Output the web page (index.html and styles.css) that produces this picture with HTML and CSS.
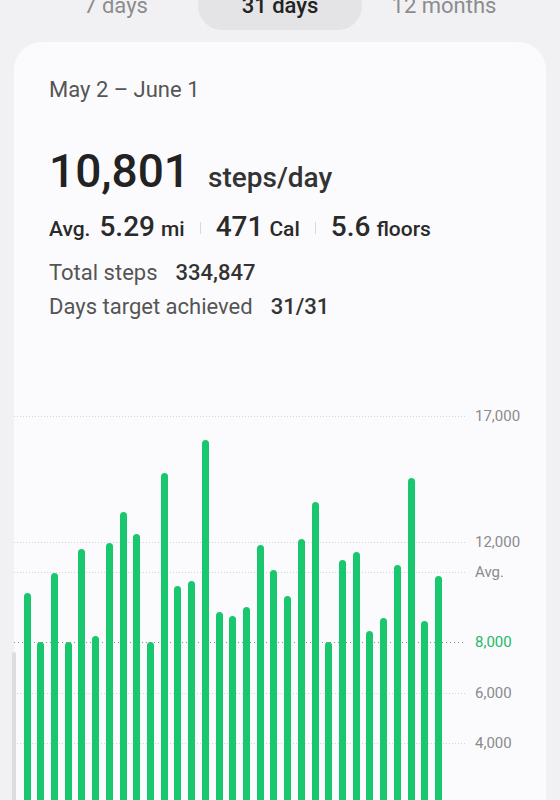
FILE: index.html
```html
<!DOCTYPE html>
<html lang="en">
<head>
    <meta charset="UTF-8">
    <meta name="viewport" content="width=device-width, initial-scale=1.0">
    <title>Steps</title>
    <link rel="stylesheet" href="styles.css">
</head>
<body>
    <div class="tabs">
        <div class="tab">7 days</div>
        <div class="tab active">31 days</div>
        <div class="tab">12 months</div>
    </div>

    <div class="card">
        <div class="range">May 2 – June 1</div>

        <div class="headline">
            <span class="big">10,801</span>
            <span class="per">steps/day</span>
        </div>

        <div class="averages">
            <span class="avg-label">Avg.</span>
            <span class="num">5.29</span>
            <span class="unit">mi</span>
            <span class="sep"></span>
            <span class="num">471</span>
            <span class="unit">Cal</span>
            <span class="sep"></span>
            <span class="num">5.6</span>
            <span class="unit">floors</span>
        </div>

        <div class="totals">
            <div class="total-row"><span>Total steps</span><span class="total-value">334,847</span></div>
            <div class="total-row"><span>Days target achieved</span><span class="total-value">31/31</span></div>
        </div>

        <div class="chart">
            <!-- grid lines, value in steps -->
            <div class="grid-line" style="--v: 17000"><span class="dots"></span><span class="axis-label">17,000</span></div>
            <div class="grid-line" style="--v: 12000"><span class="dots"></span><span class="axis-label">12,000</span></div>
            <div class="grid-line" style="--v: 10801"><span class="dots"></span><span class="axis-label">Avg.</span></div>
            <div class="grid-line target" style="--v: 8000"><span class="dots"></span><span class="axis-label">8,000</span></div>
            <div class="grid-line" style="--v: 6000"><span class="dots"></span><span class="axis-label">6,000</span></div>
            <div class="grid-line" style="--v: 4000"><span class="dots"></span><span class="axis-label">4,000</span></div>

            <div class="bars">
                <div class="bar" style="--v: 9980"></div>
                <div class="bar" style="--v: 8040"></div>
                <div class="bar" style="--v: 10780"></div>
                <div class="bar" style="--v: 8040"></div>
                <div class="bar" style="--v: 11730"></div>
                <div class="bar" style="--v: 8280"></div>
                <div class="bar" style="--v: 11970"></div>
                <div class="bar" style="--v: 13200"></div>
                <div class="bar" style="--v: 12320"></div>
                <div class="bar" style="--v: 8040"></div>
                <div class="bar" style="--v: 14750"></div>
                <div class="bar" style="--v: 10260"></div>
                <div class="bar" style="--v: 10460"></div>
                <div class="bar" style="--v: 16060"></div>
                <div class="bar" style="--v: 9230"></div>
                <div class="bar" style="--v: 9070"></div>
                <div class="bar" style="--v: 9430"></div>
                <div class="bar" style="--v: 11890"></div>
                <div class="bar" style="--v: 10900"></div>
                <div class="bar" style="--v: 9860"></div>
                <div class="bar" style="--v: 12130"></div>
                <div class="bar" style="--v: 13600"></div>
                <div class="bar" style="--v: 8040"></div>
                <div class="bar" style="--v: 11290"></div>
                <div class="bar" style="--v: 11610"></div>
                <div class="bar" style="--v: 8480"></div>
                <div class="bar" style="--v: 8990"></div>
                <div class="bar" style="--v: 11100"></div>
                <div class="bar" style="--v: 14550"></div>
                <div class="bar" style="--v: 8870"></div>
                <div class="bar" style="--v: 10660"></div>
            </div>
        </div>
    </div>

    <div class="scroll-hint"></div>
</body>
</html>
```

FILE: styles.css
```css
body {
    font-family: Roboto, 'Noto Sans', 'Liberation Sans', sans-serif;
    margin: 0;
    background-color: #f1f1f3;
    color: #222;
    overflow: hidden;
}
.tabs {
    display: flex;
    width: 492px;
    margin: -18px auto 0;
}
.tab {
    flex: 1;
    text-align: center;
    height: 48px;
    line-height: 48px;
    font-size: 22px;
    color: #8c8c8e;
    border-radius: 24px;
}
.tab.active {
    background: #e4e4e6;
    color: #222;
    font-weight: 500;
}
.card {
    margin: 12px 14px 0;
    padding: 34px 35px 0;
    background: #fbfbfd;
    border-radius: 28px;
}
.range {
    font-size: 22px;
    line-height: 28px;
    color: #555;
}
.headline {
    display: flex;
    align-items: baseline;
    margin-top: 40px;
    line-height: 54px;
}
.big {
    font-size: 46px;
    font-weight: 500;
    color: #222;
}
.per {
    font-size: 28px;
    font-weight: 500;
    color: #333;
    margin-left: 18px;
}
.averages {
    display: flex;
    align-items: baseline;
    margin-top: 5px;
    line-height: 34px;
    color: #2a2a2a;
    font-weight: 500;
}
.avg-label {
    font-size: 21px;
    margin-right: 9px;
}
.num {
    font-size: 28px;
    margin-right: 6px;
}
.unit {
    font-size: 21px;
}
.sep {
    align-self: center;
    width: 1px;
    height: 12px;
    margin: 0 15px 0 15px;
    background: #d8d8da;
}
.totals {
    margin-top: 10px;
    font-size: 22px;
    line-height: 34px;
    color: #555;
}
.total-row {
    display: flex;
    gap: 18px;
}
.total-value {
    color: #333;
    font-weight: 500;
}
.chart {
    position: relative;
    height: 428.4px;
    margin: 92px -35px 0;
}
.grid-line {
    position: absolute;
    left: 0;
    right: 0;
    bottom: calc(var(--v) * 0.0252px);
    height: 0;
    display: flex;
    align-items: center;
}
.dots {
    width: 452px;
    height: 1px;
    background: repeating-linear-gradient(to right, #d6d6d8 0 1px, transparent 1px 3px);
}
.axis-label {
    margin-left: 9px;
    font-size: 15px;
    line-height: 1;
    color: #8a8a8c;
}
.target .dots {
    background: repeating-linear-gradient(to right, #8e8e90 0 1px, transparent 1px 4px);
}
.target .axis-label {
    color: #1fb866;
}
.bars {
    position: relative;
    z-index: 1;
    height: 100%;
    display: flex;
    align-items: flex-end;
    gap: 6.73px;
    padding-left: 9.5px;
}
.bar {
    width: 7px;
    height: calc(var(--v) * 0.0252px);
    background: #19c86e;
    border-radius: 3.5px 3.5px 0 0;
}
.scroll-hint {
    position: absolute;
    left: 12px;
    top: 652px;
    width: 4px;
    height: 200px;
    border-radius: 2px;
    background: #dcdcde;
}
```
